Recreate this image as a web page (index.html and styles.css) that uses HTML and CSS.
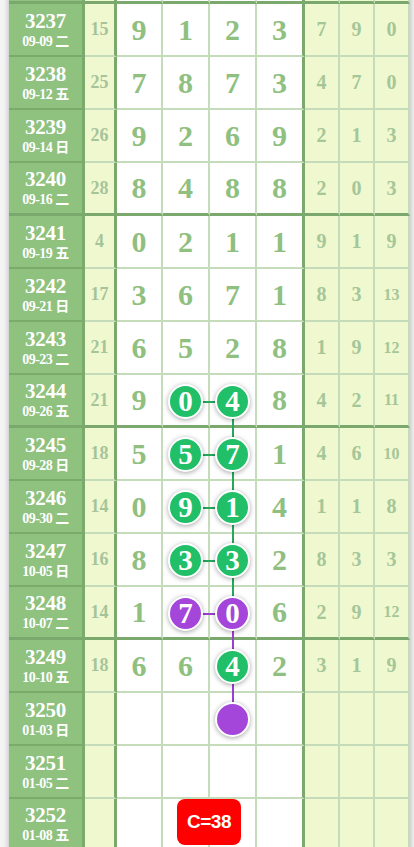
FILE: index.html
```html
<!DOCTYPE html>
<html lang="zh">
<head>
<meta charset="utf-8">
<title>走势图</title>
<link rel="stylesheet" href="styles.css">
</head>
<body>
<div class="chart">
  <svg class="links" width="401" height="901" viewBox="0 0 401 901">
    <line x1="224" y1="451" x2="224" y2="663" stroke="#25a85c" stroke-width="2"/>
    <line x1="224" y1="663" x2="224" y2="769" stroke="#9a3fd0" stroke-width="2"/>
    <line x1="176" y1="451" x2="224" y2="451" stroke="#25a85c" stroke-width="2"/>
    <line x1="176" y1="504" x2="224" y2="504" stroke="#25a85c" stroke-width="2"/>
    <line x1="176" y1="557" x2="224" y2="557" stroke="#25a85c" stroke-width="2"/>
    <line x1="176" y1="610" x2="224" y2="610" stroke="#25a85c" stroke-width="2"/>
    <line x1="176" y1="663" x2="224" y2="663" stroke="#9a3fd0" stroke-width="2"/>
  </svg>

  <div class="r g">
    <div class="c-id"></div><div class="c-ix"></div>
    <div class="c-w"></div><div class="c-w"></div><div class="c-w"></div><div class="c-w last"></div>
    <div class="c-y"></div><div class="c-y"></div><div class="c-y"></div>
  </div>

  <div class="r">
    <div class="c-id"><b>3237</b><span>09-09 二</span></div><div class="c-ix">15</div>
    <div class="c-w">9</div><div class="c-w">1</div><div class="c-w">2</div><div class="c-w last">3</div>
    <div class="c-y">7</div><div class="c-y">9</div><div class="c-y">0</div>
  </div>
  <div class="r">
    <div class="c-id"><b>3238</b><span>09-12 五</span></div><div class="c-ix">25</div>
    <div class="c-w">7</div><div class="c-w">8</div><div class="c-w">7</div><div class="c-w last">3</div>
    <div class="c-y">4</div><div class="c-y">7</div><div class="c-y">0</div>
  </div>
  <div class="r">
    <div class="c-id"><b>3239</b><span>09-14 日</span></div><div class="c-ix">26</div>
    <div class="c-w">9</div><div class="c-w">2</div><div class="c-w">6</div><div class="c-w last">9</div>
    <div class="c-y">2</div><div class="c-y">1</div><div class="c-y">3</div>
  </div>
  <div class="r g">
    <div class="c-id"><b>3240</b><span>09-16 二</span></div><div class="c-ix">28</div>
    <div class="c-w">8</div><div class="c-w">4</div><div class="c-w">8</div><div class="c-w last">8</div>
    <div class="c-y">2</div><div class="c-y">0</div><div class="c-y">3</div>
  </div>

  <div class="r">
    <div class="c-id"><b>3241</b><span>09-19 五</span></div><div class="c-ix">4</div>
    <div class="c-w">0</div><div class="c-w">2</div><div class="c-w">1</div><div class="c-w last">1</div>
    <div class="c-y">9</div><div class="c-y">1</div><div class="c-y">9</div>
  </div>
  <div class="r">
    <div class="c-id"><b>3242</b><span>09-21 日</span></div><div class="c-ix">17</div>
    <div class="c-w">3</div><div class="c-w">6</div><div class="c-w">7</div><div class="c-w last">1</div>
    <div class="c-y">8</div><div class="c-y">3</div><div class="c-y two">13</div>
  </div>
  <div class="r">
    <div class="c-id"><b>3243</b><span>09-23 二</span></div><div class="c-ix">21</div>
    <div class="c-w">6</div><div class="c-w">5</div><div class="c-w">2</div><div class="c-w last">8</div>
    <div class="c-y">1</div><div class="c-y">9</div><div class="c-y two">12</div>
  </div>
  <div class="r g">
    <div class="c-id"><b>3244</b><span>09-26 五</span></div><div class="c-ix">21</div>
    <div class="c-w">9</div><div class="c-w"><i class="ball">0</i></div><div class="c-w"><i class="ball">4</i></div><div class="c-w last">8</div>
    <div class="c-y">4</div><div class="c-y">2</div><div class="c-y two">11</div>
  </div>

  <div class="r">
    <div class="c-id"><b>3245</b><span>09-28 日</span></div><div class="c-ix">18</div>
    <div class="c-w">5</div><div class="c-w"><i class="ball">5</i></div><div class="c-w"><i class="ball">7</i></div><div class="c-w last">1</div>
    <div class="c-y">4</div><div class="c-y">6</div><div class="c-y two">10</div>
  </div>
  <div class="r">
    <div class="c-id"><b>3246</b><span>09-30 二</span></div><div class="c-ix">14</div>
    <div class="c-w">0</div><div class="c-w"><i class="ball">9</i></div><div class="c-w"><i class="ball">1</i></div><div class="c-w last">4</div>
    <div class="c-y">1</div><div class="c-y">1</div><div class="c-y">8</div>
  </div>
  <div class="r">
    <div class="c-id"><b>3247</b><span>10-05 日</span></div><div class="c-ix">16</div>
    <div class="c-w">8</div><div class="c-w"><i class="ball">3</i></div><div class="c-w"><i class="ball">3</i></div><div class="c-w last">2</div>
    <div class="c-y">8</div><div class="c-y">3</div><div class="c-y">3</div>
  </div>
  <div class="r g">
    <div class="c-id"><b>3248</b><span>10-07 二</span></div><div class="c-ix">14</div>
    <div class="c-w">1</div><div class="c-w"><i class="ball p">7</i></div><div class="c-w"><i class="ball p">0</i></div><div class="c-w last">6</div>
    <div class="c-y">2</div><div class="c-y">9</div><div class="c-y two">12</div>
  </div>

  <div class="r">
    <div class="c-id"><b>3249</b><span>10-10 五</span></div><div class="c-ix">18</div>
    <div class="c-w">6</div><div class="c-w">6</div><div class="c-w"><i class="ball">4</i></div><div class="c-w last">2</div>
    <div class="c-y">3</div><div class="c-y">1</div><div class="c-y">9</div>
  </div>
  <div class="r">
    <div class="c-id"><b>3250</b><span>01-03 日</span></div><div class="c-ix"></div>
    <div class="c-w"></div><div class="c-w"></div><div class="c-w"><i class="ball p"></i></div><div class="c-w last"></div>
    <div class="c-y"></div><div class="c-y"></div><div class="c-y"></div>
  </div>
  <div class="r">
    <div class="c-id"><b>3251</b><span>01-05 二</span></div><div class="c-ix"></div>
    <div class="c-w"></div><div class="c-w"></div><div class="c-w"></div><div class="c-w last"></div>
    <div class="c-y"></div><div class="c-y"></div><div class="c-y"></div>
  </div>
  <div class="r g">
    <div class="c-id"><b>3252</b><span>01-08 五</span></div><div class="c-ix"></div>
    <div class="c-w"></div><div class="c-w"></div><div class="c-w"></div><div class="c-w last"></div>
    <div class="c-y"></div><div class="c-y"></div><div class="c-y"></div>
  </div>

  <div class="badge">C=38</div>
</div>
</body>
</html>
```

FILE: styles.css
```css
* { box-sizing: border-box; }

html, body {
  margin: 0;
  padding: 0;
  background: #f4f4f4;
  overflow: hidden;
}

body {
  width: 414px;
  height: 847px;
}

.chart {
  position: relative;
  width: 401px;
  margin-left: 9px;
  margin-top: -49px;
  background: #fff;
  box-shadow: 0 0 6px rgba(0, 0, 0, 0.28);
  font-family: "Liberation Serif", "Noto Sans CJK SC", serif;
  font-weight: bold;
}

.links {
  position: absolute;
  left: 0;
  top: 0;
  z-index: 1;
  pointer-events: none;
}

.r {
  display: grid;
  grid-template-columns: 76px 32px 46px 47px 47px 48px 35px 35px 35px;
  height: 53px;
}

.r > div {
  display: flex;
  align-items: center;
  justify-content: center;
  border-right: 2px solid #c5dcba;
  border-bottom: 2px solid #c5dcba;
}

.r.g > div {
  border-bottom: 3px solid #7ba86c;
}

.c-id {
  flex-direction: column;
  background: #8fc17f;
  color: #fff;
  line-height: 1;
}

.r > .c-id {
  border-right: 3px solid #7bab6b;
  border-bottom-color: #7bab6b;
}

.c-id b {
  font-size: 21px;
  letter-spacing: -0.3px;
}

.c-id span {
  font-size: 14px;
  margin-top: 3px;
  letter-spacing: -0.5px;
}

.c-ix {
  background: #f0f8cf;
  color: #a6c49a;
  font-size: 18px;
}

.r > .c-ix {
  border-right: 3px solid #7ba86c;
}

.c-w {
  background: #fff;
  color: #8fc080;
  font-size: 30px;
}

.r > .c-w.last {
  border-right: 3px solid #7ba86c;
}

.c-y {
  background: #f0f8cf;
  color: #a5c699;
  font-size: 20px;
}

.c-y.two {
  font-size: 16px;
}

.ball {
  position: relative;
  z-index: 2;
  display: flex;
  align-items: center;
  justify-content: center;
  width: 35px;
  height: 35px;
  margin-top: 2px;
  border-radius: 50%;
  border: 2px solid #fff;
  background: #21bf68;
  color: #fff;
  font-style: normal;
  font-size: 29px;
  line-height: 1;
  box-shadow: 0 1px 5px rgba(0, 0, 0, 0.35);
}

.ball.p {
  background: #a446d9;
}

.badge {
  position: absolute;
  left: 168px;
  top: 848px;
  z-index: 3;
  width: 64px;
  height: 46px;
  border-radius: 8px;
  background: #ff0000;
  color: #fff;
  font-family: "Liberation Sans", Arial, sans-serif;
  font-weight: bold;
  font-size: 19px;
  display: flex;
  align-items: center;
  justify-content: center;
  letter-spacing: -0.5px;
}
```
